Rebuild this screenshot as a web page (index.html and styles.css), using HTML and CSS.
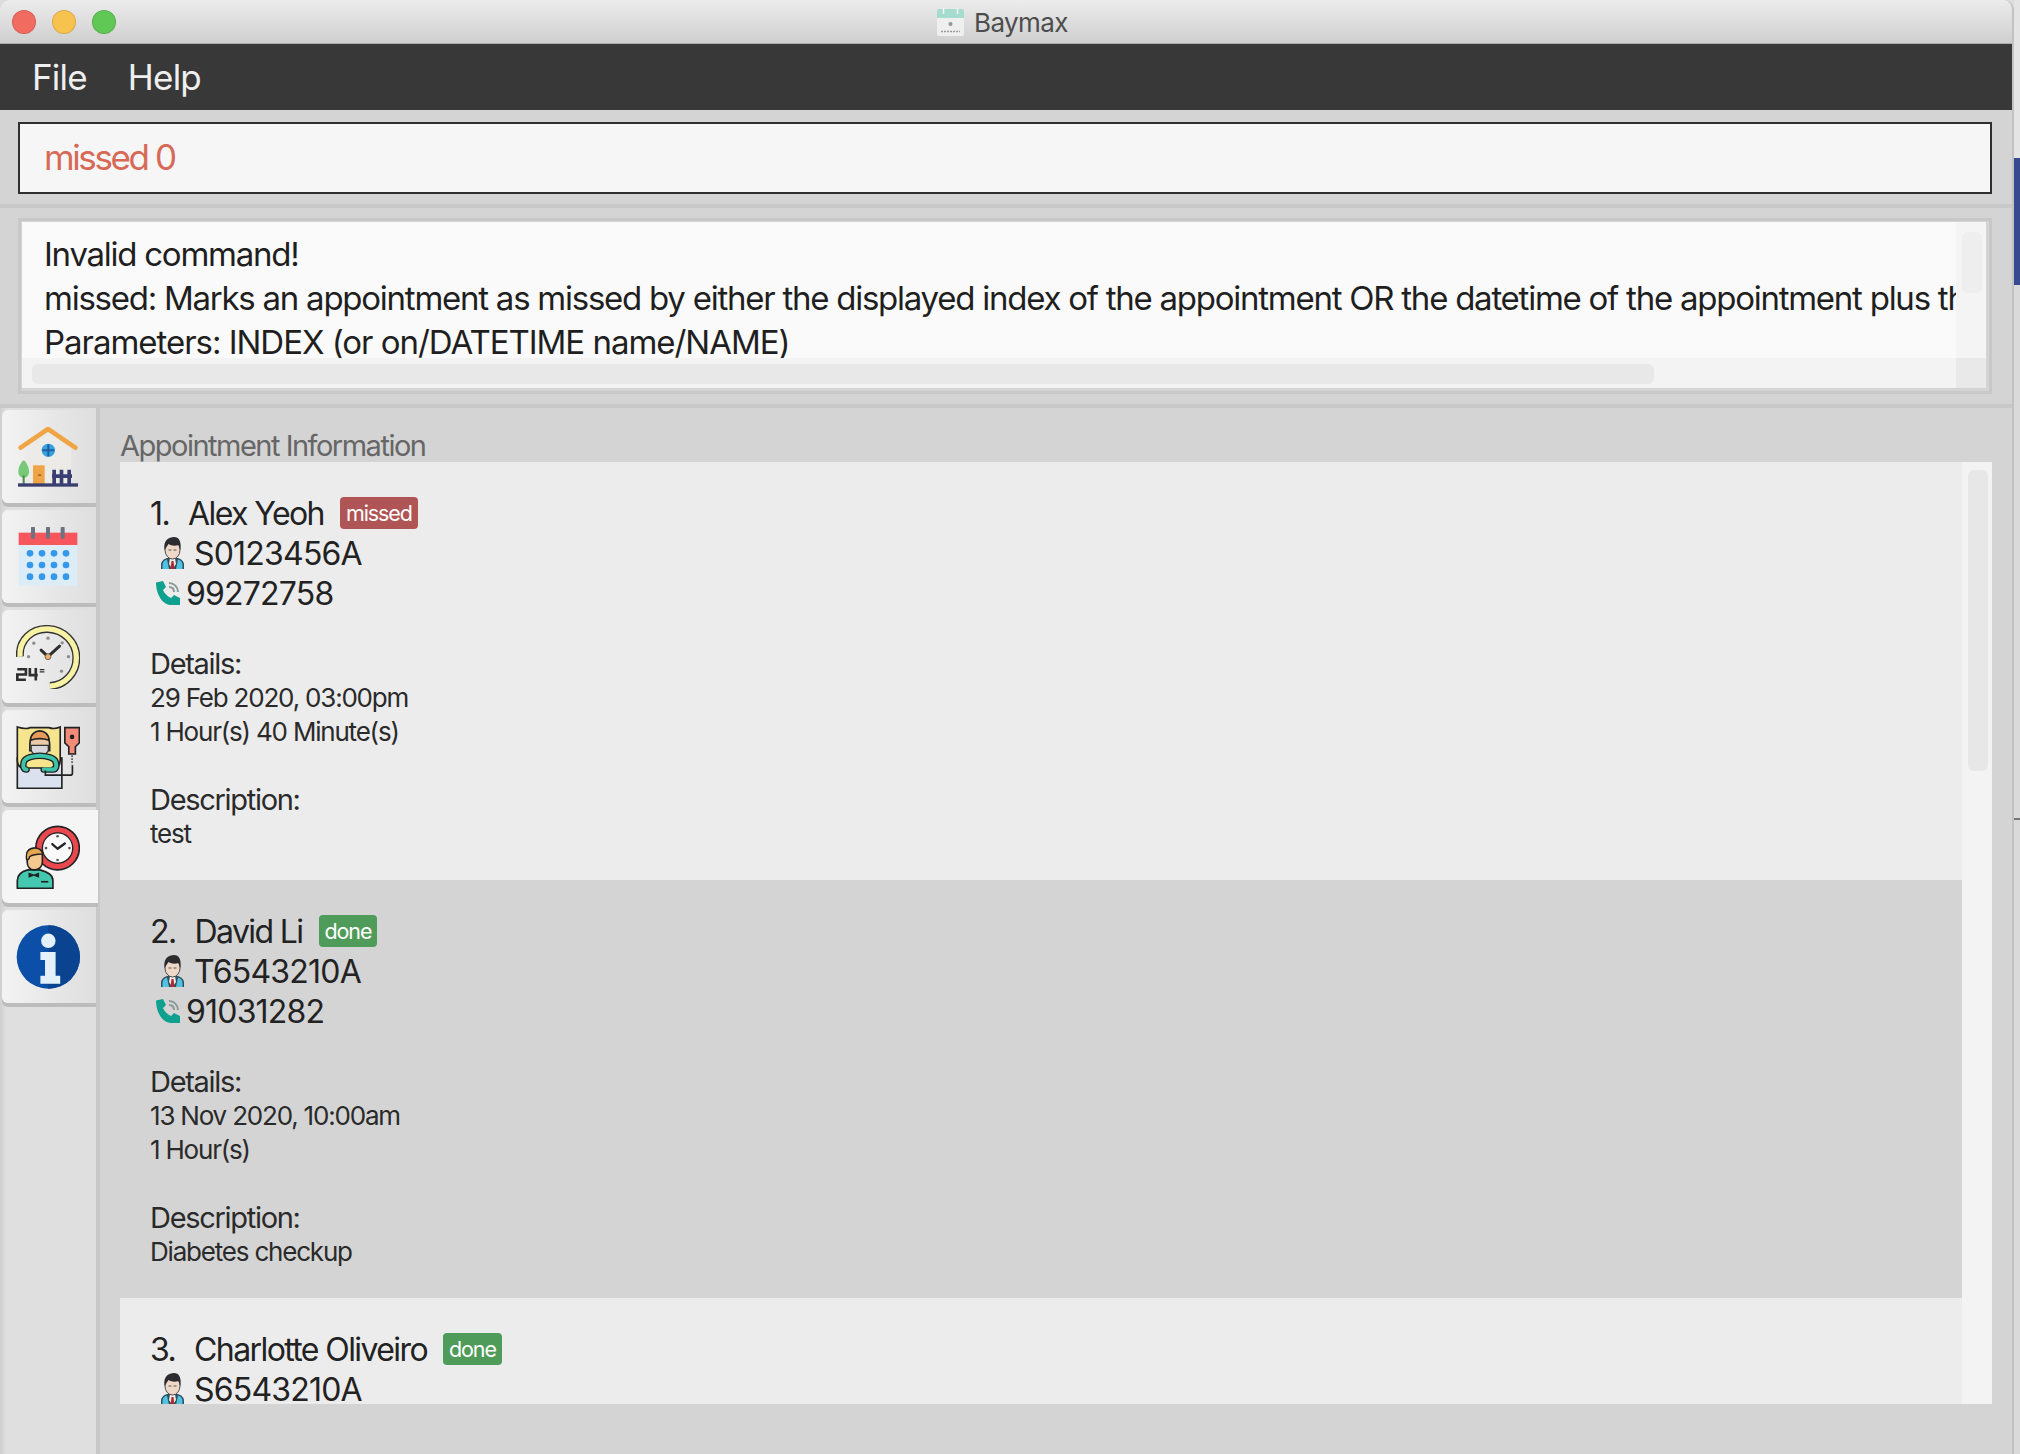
FILE: index.html
```html
<!DOCTYPE html>
<html lang="en">
<head>
<meta charset="utf-8">
<title>Baymax</title>
<link rel="stylesheet" href="styles.css">
</head>
<body>
<svg class="defs" width="0" height="0" aria-hidden="true">
  <symbol id="person" viewBox="0 0 25 32">
    <path d="M1 32v-4c0-4 3-6 6-7h11c3 1 6 3 6 7v4z" fill="#2f4f63"/>
    <path d="M2.500 32v-4c0-3 2-5 4.500-5.500l2 9.500zM22.500 32v-4c0-3-2-5-4.500-5.500l-2 9.500z" fill="#4fc3e0"/>
    <path d="M10 21h5l1 6-3.500 5-3.500-5z" fill="#f2ece6"/>
    <path d="M11.500 24h2l1 8h-4z" fill="#b02a30"/>
    <ellipse cx="12.500" cy="13" rx="7.500" ry="9" fill="#f0d8c8" stroke="#4a4a4a" stroke-width="1"/>
    <path d="M4.500 13C3 3 9 0 14 0c5 0 7.500 4 6.500 13l-2-5c-3 1-7 1-10-1z" fill="#2c2c30"/>
    <path d="M8.500 13h3M13.500 13h3" stroke="#555" stroke-width="1"/>
  </symbol>
  <symbol id="phone" viewBox="0 0 24 24">
    <path d="M0 1.500 7 0l3 6-3 3c1.500 3.500 4 6 8 8l3-3 6 3v7H15C7 24 0 14 0 1.500z" fill="#10a08f"/>
    <path d="M13 6c3 0 5 2 5 5M13 2c5 0 9 4 9 9" fill="none" stroke="#8a9a98" stroke-width="2"/>
  </symbol>
</svg>

<div class="desktop">
  <div class="window">
    <header class="titlebar">
      <div class="lights">
        <span class="light light-red"></span>
        <span class="light light-yellow"></span>
        <span class="light light-green"></span>
      </div>
      <div class="title">
        <svg class="title-icon" viewBox="0 0 27 28" width="27" height="28" aria-hidden="true">
          <rect x="0" y="1" width="27" height="27" rx="2" fill="#efefef"/>
          <path d="M0 3a2 2 0 0 1 2-2h23a2 2 0 0 1 2 2v7H0z" fill="#a6dcd0"/>
          <path d="M6.500 0v6M20.500 0v6" stroke="#f4f4f4" stroke-width="1.500"/>
          <circle cx="13.500" cy="16" r="2" fill="#8a9a98"/>
          <path d="M4 23.500h19" stroke="#9a9a9a" stroke-width="1.500" stroke-dasharray="2 1"/>
        </svg>
        <span class="title-text">Baymax</span>
      </div>
    </header>

    <nav class="menubar">
      <span class="menu-item">File</span>
      <span class="menu-item">Help</span>
    </nav>

    <section class="command-section">
      <div class="command-box">missed 0</div>
    </section>

    <section class="result-section">
      <div class="result-box">
        <div class="result-top">
          <div class="result-text">
            <div>Invalid command!</div>
            <div>missed: Marks an appointment as missed by either the displayed index of the appointment OR the datetime of the appointment plus the name of the patient</div>
            <div class="result-params">Parameters: INDEX (or on/DATETIME name/NAME)</div>
          </div>
          <div class="result-vtrack"><div class="result-vthumb"></div></div>
        </div>
        <div class="result-bottom">
          <div class="result-htrack"><div class="result-hthumb"></div></div>
          <div class="result-corner"></div>
        </div>
      </div>
    </section>

    <main class="main">
      <aside class="sidebar">
        <div class="tab">
          <svg class="icon-lg" viewBox="54 80 180 180" aria-hidden="true">
            <path d="M74 145 144 92l70 53v108H74z" fill="#ecebe8"/>
            <path d="M62 142 144 86l82 56" fill="none" stroke="#efa545" stroke-width="14" stroke-linecap="round" stroke-linejoin="round"/>
            <circle cx="145" cy="150" r="20" fill="#37a0e0"/>
            <path d="M145 132v36M127 150h36" stroke="#1d5f9c" stroke-width="6"/>
            <rect x="99" y="195" width="35" height="58" fill="#efa545"/>
            <rect x="114" y="222" width="10" height="5" fill="#a06a20"/>
            <path d="M71 180c11 8 16 24 16 34 0 11-7 18-16 18s-16-7-16-18c0-10 5-26 16-34z" fill="#77c877"/>
            <rect x="68" y="225" width="6" height="28" fill="#4a8a4a"/>
            <path d="M157 208h11v45h-11zM179 208h11v45h-11zM202 208h11v45h-11zM156 222h60v11h-60z" fill="#3b3e70"/>
            <rect x="54" y="249" width="180" height="10" fill="#3b3e70"/>
          </svg>
        </div>
        <div class="tab">
          <svg class="icon-lg" viewBox="54 378 180 180" aria-hidden="true">
            <rect x="56" y="432" width="176" height="122" fill="#dcedf8"/>
            <rect x="56" y="395" width="176" height="37" fill="#f7565c"/>
            <path d="M99 382v26M144 382v26M188 382v26" stroke="#6d7180" stroke-width="12" stroke-linecap="round"/>
            <g fill="#3598e8">
              <circle cx="90" cy="457" r="10"/><circle cx="126" cy="457" r="10"/><circle cx="162" cy="457" r="10"/><circle cx="198" cy="457" r="10"/>
              <circle cx="90" cy="492" r="10"/><circle cx="126" cy="492" r="10"/><circle cx="162" cy="492" r="10"/><circle cx="198" cy="492" r="10"/>
              <circle cx="90" cy="527" r="10"/><circle cx="126" cy="527" r="10"/><circle cx="162" cy="527" r="10"/><circle cx="198" cy="527" r="10"/>
            </g>
          </svg>
        </div>
        <div class="tab">
          <svg class="icon-lg-2" viewBox="46 40 194 194" aria-hidden="true">
            <path d="M58 136C54 86 94 50 143 52c48 2 86 40 86 87 0 46-34 84-80 86" fill="none" stroke="#333" stroke-width="24" stroke-linecap="butt"/>
            <path d="M58 136C54 86 94 50 143 52c48 2 86 40 86 87 0 46-34 84-80 86" fill="none" stroke="#f7f2a4" stroke-width="16" stroke-linecap="butt"/>
            <path d="M122 116l21 20 35-32" fill="none" stroke="#2e2e2e" stroke-width="9" stroke-linecap="round" stroke-linejoin="round"/>
            <circle cx="143" cy="136" r="9" fill="#eab070" stroke="#333" stroke-width="2"/>
            <g fill="#8c8c8c">
              <circle cx="143" cy="80" r="5"/><circle cx="205" cy="136" r="5"/><circle cx="184" cy="180" r="5"/><circle cx="100" cy="95" r="5"/><circle cx="84" cy="136" r="5"/><circle cx="186" cy="94" r="5"/>
            </g>
            <path d="M50 174h26v16H50v16h26M88 170v22h24M106 170v38" fill="none" stroke="#2e2e2e" stroke-width="8"/>
            <path d="M118 175h14M118 182h14" stroke="#2e2e2e" stroke-width="4"/>
          </svg>
        </div>
        <div class="tab">
          <svg class="icon-lg-2" viewBox="46 340 194 194" aria-hidden="true">
            <rect x="50" y="440" width="135" height="92" fill="#dbe1ee" stroke="#222" stroke-width="5"/>
            <path d="M50 346c20 6 30 6 38 2h58c10 4 20 4 34-2v100c0 14-6 24-20 24H70c-14 0-20-10-20-24z" fill="#f6e48e" stroke="#222" stroke-width="5"/>
            <path d="M88 400c0-24 14-40 30-40s30 16 30 40v18H88z" fill="#ecc9a8" stroke="#222" stroke-width="5"/>
            <path d="M90 386c0-18 14-28 28-28s28 10 28 28c-18-6-38-6-56 0z" fill="#e89a5a" stroke="#222" stroke-width="5"/>
            <path d="M92 402h52v14c0 8-12 16-26 16s-26-8-26-16z" fill="#d8d8dc" stroke="#333" stroke-width="4"/>
            <path d="M78 475c-10 0-12-10-8-24 4-12 30-18 48-18s44 6 48 18c4 14 2 24-8 24h-28" fill="none" stroke="#222" stroke-width="20" stroke-linecap="round"/>
            <path d="M78 475c-10 0-12-10-8-24 4-12 30-18 48-18s44 6 48 18c4 14 2 24-8 24h-28" fill="none" stroke="#3cc4ab" stroke-width="12" stroke-linecap="round"/>
            <path d="M82 462h72" stroke="#f6e48e" stroke-width="12"/>
            <path d="M135 478v14h76c4 0 6-3 6-6v-24" fill="none" stroke="#222" stroke-width="5"/>
            <path d="M216 432v28" stroke="#555" stroke-width="5" stroke-dasharray="5 4"/>
            <path d="M194 348h44v46l-12 12v22h-20v-22l-12-12z" fill="#f28b78" stroke="#222" stroke-width="5"/>
            <circle cx="216" cy="376" r="7" fill="#222"/>
          </svg>
        </div>
        <div class="tab tab-active">
          <svg class="icon-lg-2" viewBox="46 640 194 194" aria-hidden="true">
            <circle cx="172" cy="710" r="66" fill="#e8484e" stroke="#222" stroke-width="5"/>
            <circle cx="172" cy="710" r="46" fill="#fafafa" stroke="#222" stroke-width="4"/>
            <path d="M156 698l16 14 22-16" fill="none" stroke="#222" stroke-width="7" stroke-linecap="round" stroke-linejoin="round"/>
            <g fill="#555"><circle cx="172" cy="674" r="4"/><circle cx="172" cy="746" r="4"/><circle cx="137" cy="710" r="4"/><circle cx="208" cy="710" r="4"/></g>
            <path d="M50 832v-24c0-18 16-28 32-32h36c16 4 40 14 40 32v24z" fill="#45c8b0" stroke="#222" stroke-width="5"/>
            <path d="M80 730c-2-12 8-20 22-20s26 8 24 20v22c0 14-10 24-24 24s-22-10-22-24z" fill="#f4c88e" stroke="#222" stroke-width="5"/>
            <path d="M78 745c-4-24 8-35 24-35 12 0 22 6 25 18-18 0-32 2-40 8 0 6-3 9-9 9z" fill="#e8a650" stroke="#222" stroke-width="4"/>
            <path d="M84 784l16 6 16-6v16l-16-6-16 6z" fill="#222"/>
            <path d="M122 812h22" stroke="#222" stroke-width="5"/>
          </svg>
        </div>
        <div class="tab">
          <svg class="icon-lg-2" viewBox="46 940 194 194" aria-hidden="true">
            <circle cx="144" cy="1037" r="96" fill="#0b4fa8"/>
            <path d="M144 941a96 96 0 0 1 0 192z" fill="#0a4491"/>
            <circle cx="144" cy="988" r="22" fill="#e4f1fb"/>
            <path d="M120 1022h46v72h14v24h-60v-24h14v-48h-14z" fill="#e4f1fb"/>
          </svg>
        </div>
      </aside>

      <div class="content">
        <div class="list-label">Appointment Information</div>
        <div class="list">
          <div class="cards">
            <article class="card card-odd">
              <div class="name-row"><span class="index">1.</span><span class="name">Alex Yeoh</span><span class="tag tag-missed">missed</span></div>
              <div class="id-row"><svg class="person"><use href="#person"/></svg><span>S0123456A</span></div>
              <div class="phone-row"><svg class="phone"><use href="#phone"/></svg><span>99272758</span></div>
              <div class="heading heading-first">Details:</div>
              <div class="detail">29 Feb 2020, 03:00pm</div>
              <div class="detail">1 Hour(s) 40 Minute(s)</div>
              <div class="heading heading-next">Description:</div>
              <div class="detail">test</div>
            </article>
            <article class="card card-even">
              <div class="name-row"><span class="index">2.</span><span class="name">David Li</span><span class="tag tag-done">done</span></div>
              <div class="id-row"><svg class="person"><use href="#person"/></svg><span>T6543210A</span></div>
              <div class="phone-row"><svg class="phone"><use href="#phone"/></svg><span>91031282</span></div>
              <div class="heading heading-first">Details:</div>
              <div class="detail">13 Nov 2020, 10:00am</div>
              <div class="detail">1 Hour(s)</div>
              <div class="heading heading-next">Description:</div>
              <div class="detail">Diabetes checkup</div>
            </article>
            <article class="card card-odd">
              <div class="name-row"><span class="index">3.</span><span class="name">Charlotte Oliveiro</span><span class="tag tag-done">done</span></div>
              <div class="id-row"><svg class="person"><use href="#person"/></svg><span>S6543210A</span></div>
            </article>
          </div>
          <div class="list-track"><div class="list-thumb"></div></div>
        </div>
      </div>
    </main>
  </div>
  <div class="strip">
    <div class="strip-top"></div>
    <div class="strip-blue"></div>
    <div class="strip-mid"></div>
    <div class="strip-line"></div>
    <div class="strip-low"></div>
  </div>
</div>
</body>
</html>
```

FILE: styles.css
```css
* { box-sizing: border-box; }
html, body { margin: 0; padding: 0; }
body {
  width: 2020px;
  height: 1454px;
  overflow: hidden;
  font-family: Inter, "Liberation Sans", sans-serif;
  color: #222;
  background: #dcdcdc;
}
.defs { display: block; height: 0; }

.desktop { display: flex; height: 1454px; }
.window {
  width: 2014px;
  height: 1454px;
  display: flex;
  flex-direction: column;
  overflow: hidden;
  background: #d4d4d4;
  border-radius: 10px 10px 0 0;
  border-right: 2px solid #c2c2c2;
}
.strip { flex: 1; display: flex; flex-direction: column; }
.strip-top { height: 158px; background: #e4e4e4; }
.strip-blue { height: 127px; background: #3a4a8f; }
.strip-mid { height: 533px; background: #dadada; }
.strip-line { height: 2px; background: #777; }
.strip-low { flex: 1; background: #dadada; }

.titlebar {
  height: 44px;
  flex: none;
  display: flex;
  align-items: center;
  background: linear-gradient(#ececec, #cfcfcf);
  border-bottom: 1px solid #aeaeae;
}
.lights { display: flex; gap: 16px; padding-left: 12px; width: 937px; }
.light { width: 24px; height: 24px; border-radius: 50%; border: 1px solid rgba(0,0,0,.12); }
.light-red { background: #f26b60; }
.light-yellow { background: #f8c24f; }
.light-green { background: #60c854; }
.title { display: flex; align-items: center; gap: 10px; }
.title-icon { filter: blur(.4px); }
.title-text { font-size: 26px; line-height: 30px; padding-top: 2px; color: #4d4d4d; letter-spacing: -.6px; }

.menubar {
  height: 66px;
  flex: none;
  display: flex;
  align-items: center;
  gap: 41px;
  padding-left: 32px;
  background: #383838;
}
.menu-item { font-size: 35px; color: #efefef; letter-spacing: -.8px; }

.command-section {
  height: 98px;
  flex: none;
  padding: 12px 20px 0 18px;
  border-bottom: 4px solid #c8c8c8;
}
.command-box {
  height: 72px;
  display: flex;
  align-items: center;
  padding: 0 0 2px 24px;
  background: #f6f6f6;
  border: 2px solid #2f2f2f;
  font-size: 35px;
  letter-spacing: -2.4px;
  color: #d76a56;
}

.result-section {
  height: 200px;
  flex: none;
  padding: 10px 20px 0 18px;
  border-bottom: 4px solid #c8c8c8;
}
.result-box {
  height: 176px;
  display: flex;
  flex-direction: column;
  border: 3px solid #c8c8c8;
  padding: 1px 3px 3px 1px;
  background: #d4d4d4;
}
.result-top { flex: 1; display: flex; min-height: 0; }
.result-text {
  flex: 1;
  min-width: 0;
  overflow: hidden;
  white-space: nowrap;
  padding: 10px 0 0 22px;
  background: #fafafa;
  font-size: 33px;
  line-height: 44px;
  letter-spacing: -1.25px;
  color: #1f1f1f;
}
.result-params { letter-spacing: -1.03px; }
.result-vtrack { width: 30px; padding: 10px 4px 0 6px; background: #f4f4f4; }
.result-vthumb { height: 61px; border-radius: 6px; background: #eeeeee; }
.result-bottom { height: 30px; flex: none; display: flex; }
.result-htrack { flex: 1; padding: 6px 0 4px 10px; background: #f3f3f3; }
.result-hthumb { width: 1622px; height: 20px; border-radius: 6px; background: #e8e8e8; }
.result-corner { width: 30px; background: #e9e9e9; }

.main { flex: 1; display: flex; min-height: 0; }
.sidebar {
  width: 100px;
  flex: none;
  display: flex;
  flex-direction: column;
  gap: 7px;
  padding-top: 2px;
  background: linear-gradient(to right, #cfcfcf, #dfdfdf 6px);
  border-right: 4px solid #c8c8c8;
}
.tab {
  width: 94px;
  height: 93px;
  margin-left: 2px;
  padding-right: 2px;
  display: flex;
  align-items: center;
  justify-content: center;
  border-radius: 6px 0 0 6px;
  background: linear-gradient(to right, #f3f3f3, #dedede);
  box-shadow: 0 4px 0 #bcbcbc;
}
.tab-active { width: 96px; padding-right: 4px; background: #f5f5f5; }
.icon-lg { width: 60px; height: 60px; filter: blur(.4px); }
.icon-lg-2 { width: 64px; height: 64px; filter: blur(.4px); }

.content {
  flex: 1;
  min-width: 0;
  display: flex;
  flex-direction: column;
  padding: 24px 20px 50px 20px;
}
.list-label {
  height: 30px;
  flex: none;
  font-size: 29px;
  line-height: 28px;
  letter-spacing: -1.5px;
  color: #666;
  white-space: nowrap;
}
.list { flex: 1; display: flex; min-height: 0; overflow: hidden; }
.cards { flex: 1; min-width: 0; overflow: hidden; }
.list-track { width: 30px; flex: none; padding: 8px 4px 0 6px; background: #f3f3f3; }
.list-thumb { height: 301px; border-radius: 6px; background: #e7e7e7; }

.card { height: 418px; padding: 31px 0 0 30px; }
.card-odd { background: #ececec; }
.card-even { background: #d4d4d4; }

.name-row, .id-row, .phone-row {
  height: 40px;
  display: flex;
  align-items: center;
  font-size: 32px;
  letter-spacing: -.8px;
  color: #222;
}
.index { margin-right: 19px; letter-spacing: -1.6px; }
.name { letter-spacing: -1.6px; }
.tag {
  height: 32px;
  display: flex;
  align-items: center;
  margin-left: 16px;
  padding: 0 6px;
  border-radius: 4px;
  font-size: 21.5px;
  letter-spacing: -1.1px;
  color: #fff;
}
.tag-missed { background: #b05555; }
.tag-done { background: #4f9b59; }
.person { width: 25px; height: 32px; margin: 0 9px 0 10px; flex: none; filter: blur(.4px); }
.phone { width: 24px; height: 24px; margin: 0 6px; flex: none; filter: blur(.4px); }
.heading { height: 34px; font-size: 29px; line-height: 34px; letter-spacing: -1.3px; color: #2a2a2a; }
.heading-first, .heading-next { margin-top: 34px; }
.detail { height: 34px; font-size: 26px; line-height: 34px; letter-spacing: -1.2px; color: #2a2a2a; }
```
